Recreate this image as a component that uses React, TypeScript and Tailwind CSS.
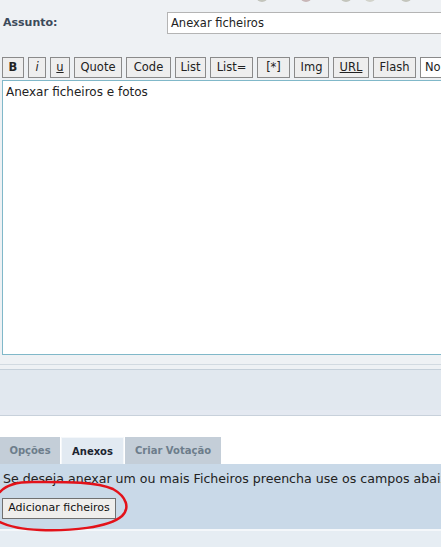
import React from "react";

const btns: { label: string; cls?: string; w: number; white?: boolean }[] = [
  { label: "B", cls: "font-bold", w: 22 },
  { label: "i", cls: "italic", w: 18 },
  { label: "u", cls: "underline", w: 20 },
  { label: "Quote", w: 48 },
  { label: "Code", w: 45 },
  { label: "List", w: 31 },
  { label: "List=", w: 43 },
  { label: "[*]", w: 33 },
  { label: "Img", w: 35 },
  { label: "URL", cls: "underline", w: 36 },
  { label: "Flash", w: 43 },
  { label: "Normal", w: 60, white: true },
];

export default function App() {
  return (
    <div className="relative w-[441px] h-[547px] overflow-hidden bg-[#eef1f4] font-['DejaVu_Sans',sans-serif] text-[#222]">
      {/* partially visible smilies row */}
      <div className="flex h-[4px] overflow-hidden pl-[256px] gap-[10px] opacity-60">
        <div className="shrink-0 w-[12px] h-[12px] -mt-[10px] rounded-full bg-[#a8a898]" />
        <div className="shrink-0 w-[12px] h-[12px] -mt-[10px] ml-[22px] rounded-full bg-[#b09090]" />
        <div className="shrink-0 w-[12px] h-[12px] -mt-[10px] ml-[18px] rounded-full bg-[#a8a898]" />
        <div className="shrink-0 w-[12px] h-[12px] -mt-[10px] ml-[2px] rounded-full bg-[#c0c0b0]" />
        <div className="shrink-0 w-[12px] h-[12px] -mt-[10px] ml-[14px] rounded-full bg-[#a8a898]" />
      </div>

      {/* Assunto row */}
      <div className="flex items-center mt-[8px] h-[22px]">
        <div className="shrink-0 w-[167px] pl-[3px] text-[11px] font-bold text-[#3c4a5a]">Assunto:</div>
        <div className="w-[290px] shrink-0 h-[22px] bg-white border border-[#b4b4b4] pl-[3px] text-[11.5px] leading-[20px] text-[#222]">
          Anexar ficheiros
        </div>
      </div>

      {/* Toolbar */}
      <div className="flex gap-[4px] pl-[2px] mt-[23px] h-[21px]">
        {btns.map((b) => (
          <div
            key={b.label}
            style={{ width: b.w }}
            className={`shrink-0 h-[21px] border border-[#8a8a8a] ${b.white ? "bg-white justify-start pl-[4px]" : "bg-[#eeeeee] justify-center"} flex items-center text-[11.5px] text-[#222]`}
          >
            <span className={b.cls}>{b.label}</span>
          </div>
        ))}
      </div>

      {/* Textarea */}
      <div className="ml-[2px] mt-[2px] w-[460px] h-[275px] bg-white border border-[#80b8c9] px-[3px] pt-[2px] text-[12px] text-[#222]">
        Anexar ficheiros e fotos
      </div>

      {/* bands */}
      <div className="h-[9px]" />
      <div className="h-[1px] bg-[#d2dae1]" />
      <div className="h-[4px] bg-[#eef1f4]" />
      <div className="h-[41px] bg-[#e1e8ef] border-t border-[#c5d0da]" />
      <div className="h-[5px] bg-[#e4e9f1]" />
      <div className="h-[1px] bg-[#c8d1db]" />
      <div className="h-[21px] bg-white" />

      {/* Tabs */}
      <div className="flex h-[27px] bg-white">
        <div className="w-[60px] bg-[#c4ced8] flex items-center justify-center text-[10px] font-bold text-[#6d7d8b]">
          Opções
        </div>
        <div className="w-[63px] ml-[1px] bg-[#e2eaf2] border border-b-0 border-[#f4f7fa] flex items-center justify-center text-[10px] font-bold text-[#1c2430]">
          Anexos
        </div>
        <div className="w-[96px] ml-[1px] bg-[#c4ced8] flex items-center justify-center text-[10px] font-bold text-[#6d7d8b]">
          Criar Votação
        </div>
      </div>

      {/* Attachment panel */}
      <div className="h-[65px] bg-[#c9d9e8] pt-[7px]">
        <div className="pl-[3px] text-[12.6px] whitespace-nowrap text-[#222] leading-[16px]">
          Se deseja anexar um ou mais Ficheiros preencha use os campos abaixo
        </div>
        <div className="ml-[2px] mt-[11px] w-[114px] h-[21px] bg-[#efeeec] border border-[#707070] flex items-center justify-center text-[11px] text-[#111]">
          Adicionar ficheiros
        </div>
      </div>
      <div className="h-[2px] bg-[#f4f7fa]" />
      <div className="h-[30px] bg-[#e6edf3]" />

      {/* Red hand-drawn ellipse annotation */}
      <svg className="absolute left-0 top-[470px]" width="140" height="70" viewBox="0 0 140 70" fill="none">
        <path
          d="M0 22 C 6 15, 16 12, 32 12 C 60 12, 95 11, 113 19 C 127 27, 130 38, 122 46 C 108 58, 70 61, 40 60 C 20 59, 8 56, 0 52"
          stroke="#e3121a"
          strokeWidth="2.5"
          strokeLinecap="round"
        />
      </svg>
    </div>
  );
}
